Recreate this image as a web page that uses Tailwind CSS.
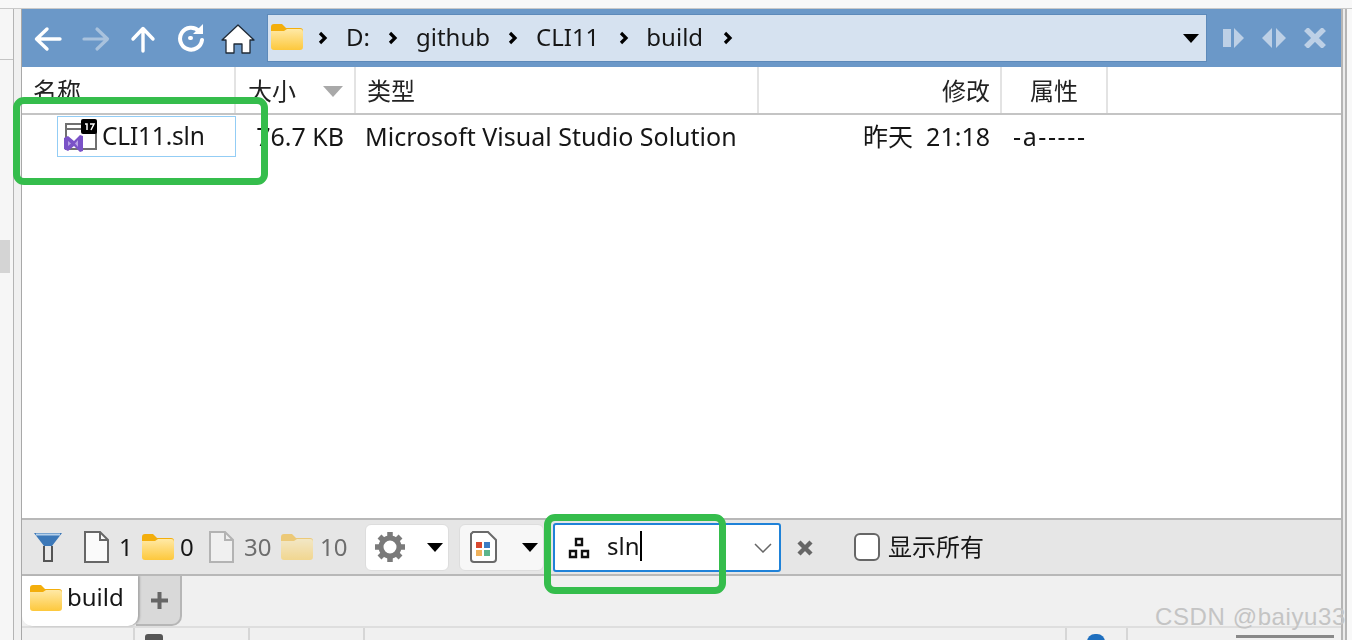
<!DOCTYPE html>
<html lang="zh">
<head>
    <meta charset="UTF-8">
    <title>build</title>
    <script src="https://cdn.jsdelivr.net/npm/@tailwindcss/browser@4"></script>
</head>
<body class="bg-[#f8f8f8] text-[#161616] font-['Noto_Sans','Noto_Sans_CJK_SC',sans-serif] overflow-hidden">

<!-- folder icon -->
<svg class="absolute w-0 h-0">
    <defs>
        <linearGradient id="fold" x1="0" y1="0" x2="0" y2="1">
            <stop offset="0" stop-color="#ffe9a6"/>
            <stop offset="1" stop-color="#fdc83c"/>
        </linearGradient>
        <symbol id="folder" viewBox="0 0 32 26">
            <path d="M0 3a3 3 0 0 1 3-3h8l4 4h14a3 3 0 0 1 3 3v4H0z" fill="#f3ae0c"/>
            <path d="M0 7h13l3-2h13a3 3 0 0 1 3 3v15a3 3 0 0 1-3 3H3a3 3 0 0 1-3-3z" fill="url(#fold)"/>
        </symbol>
    </defs>
</svg>

<div class="relative w-[1352px] h-[640px] overflow-hidden">
    <div class="flex flex-col w-full h-full blur-[0.4px]">
        <div class="h-[9px] shrink-0 bg-[#f8f8f8] border-b border-[#c9c9c9]"></div>

        <div class="flex flex-1 min-h-0">
            <!-- left rail -->
            <div class="w-[14px] shrink-0 bg-[#f6f6f6] border-r border-[#b4b4b4] pt-[50px]">
                <div class="h-[1px] bg-[#c4c4c4] mb-[180px]"></div>
                <div class="w-[10px] h-[33px] bg-[#d4d4d4]"></div>
            </div>
            <div class="w-[8px] shrink-0 bg-[#f0f0f0] border-r border-[#a8a8a8]"></div>

            <!-- main pane -->
            <div class="w-[1319px] shrink-0 flex flex-col min-h-0">
                <!-- nav bar -->
                <div class="h-[58px] shrink-0 bg-[#6b98c8] flex items-center pl-[11px] pr-[12px]">
                    <svg width="30" height="28" viewBox="0 0 30 28" fill="none" stroke="#fff" stroke-width="3.4" stroke-linecap="round" stroke-linejoin="round" class="shrink-0 mt-[1px]"><path d="M27 14H4M14 4 3.5 14 14 24"/></svg>
                    <svg width="30" height="28" viewBox="0 0 30 28" fill="none" stroke="#a9c2dd" stroke-width="3.2" stroke-linecap="round" stroke-linejoin="round" class="shrink-0 ml-[18px] mt-[1px]"><path d="M3 14h23M16 4l10.500 10L16 24"/></svg>
                    <svg width="28" height="28" viewBox="0 0 28 28" fill="none" stroke="#fff" stroke-width="3.4" stroke-linecap="round" stroke-linejoin="round" class="shrink-0 ml-[18px] mt-[1px]"><path d="M14 26V4M4 14 14 3.500 24 14"/></svg>
                    <svg width="30" height="30" viewBox="0 0 30 30" fill="none" stroke="#fff" stroke-width="4" stroke-linecap="round" class="shrink-0 ml-[19px] -mt-[1px]"><path d="M23 8a11 11 0 1 0 3 9"/><path d="M15 15h-1" stroke-width="4"/><path d="M17 11h10V1z" fill="#fff" stroke="none"/></svg>
                    <svg width="36" height="32" viewBox="0 0 36 32" fill="#fff" stroke="#1f2a36" stroke-width="1.300" stroke-linejoin="round" class="shrink-0 ml-[14px] mt-[1px]"><path d="M18 2 34 17h-4v13h-8v-9h-8v9H6V17H2z"/></svg>

                    <!-- address -->
                    <div class="ml-[11px] w-[940px] h-[48px] bg-[#d6e2f0] border border-[#5d8aba] flex items-center pl-[3px] pr-[7px] text-[24px] leading-none">
                        <svg width="32" height="26" class="shrink-0 -mt-[2px]"><use href="#folder"/></svg>
                        <svg width="11" height="14" viewBox="0 0 11 14" fill="none" stroke="#000" stroke-width="3.200" class="shrink-0 ml-[15px]"><path d="m2 2 5 5-5 5"/></svg>
                        <span class="ml-[17px] -mt-[2px]">D:</span>
                        <svg width="11" height="14" viewBox="0 0 11 14" fill="none" stroke="#000" stroke-width="3.200" class="shrink-0 ml-[18px]"><path d="m2 2 5 5-5 5"/></svg>
                        <span class="ml-[17px] -mt-[2px]">github</span>
                        <svg width="11" height="14" viewBox="0 0 11 14" fill="none" stroke="#000" stroke-width="3.200" class="shrink-0 ml-[18px]"><path d="m2 2 5 5-5 5"/></svg>
                        <span class="ml-[17px] -mt-[2px]">CLI11</span>
                        <svg width="11" height="14" viewBox="0 0 11 14" fill="none" stroke="#000" stroke-width="3.200" class="shrink-0 ml-[20px]"><path d="m2 2 5 5-5 5"/></svg>
                        <span class="ml-[16px] -mt-[2px]">build</span>
                        <svg width="11" height="14" viewBox="0 0 11 14" fill="none" stroke="#000" stroke-width="3.200" class="shrink-0 ml-[20px]"><path d="m2 2 5 5-5 5"/></svg>
                        <svg width="16" height="9" viewBox="0 0 16 9" class="shrink-0 ml-auto"><path d="M0 0h16L8 9z" fill="#000"/></svg>
                    </div>

                    <svg width="22" height="20" viewBox="0 0 22 20" fill="#bdd0e6" class="shrink-0 ml-[16px]"><path d="M0 1h8v18H0zM11 0l10 10-10 10z"/></svg>
                    <svg width="24" height="20" viewBox="0 0 24 20" fill="#bdd0e6" class="shrink-0 ml-[17px]"><path d="M10 0v20L0 10zM14 0v20l10-10z"/></svg>
                    <svg width="24" height="20" viewBox="0 0 24 20" fill="none" stroke="#bdd0e6" stroke-width="5.500" class="shrink-0 ml-[17px]"><path d="m3 1 18 18M21 1 3 19"/></svg>
                </div>

                <!-- column headers -->
                <div class="h-[48px] shrink-0 bg-white border-b-2 border-[#c4c4c4] grid grid-cols-[214px_120px_403px_243px_106px_1fr] text-[24px] leading-none text-[#222]">
                    <div class="border-r-2 border-[#e3e3e3] pl-[11px] pt-[12px]">名称</div>
                    <div class="border-r-2 border-[#e3e3e3] pl-[12px] pt-[12px] flex">
                        <span>大小</span>
                        <svg width="20" height="11" viewBox="0 0 20 11" class="ml-[27px] mt-[7px]"><path d="M0 0h20L10 11z" fill="#a9a9a9"/></svg>
                    </div>
                    <div class="border-r-2 border-[#e3e3e3] pl-[11px] pt-[12px]">类型</div>
                    <div class="border-r-2 border-[#e3e3e3] pr-[10px] pt-[12px] text-right">修改</div>
                    <div class="border-r-2 border-[#e3e3e3] pt-[12px] text-center">属性</div>
                    <div></div>
                </div>

                <!-- file list -->
                <div class="flex-1 min-h-0 bg-white">
                    <div class="grid grid-cols-[214px_120px_403px_243px_106px_1fr] text-[25px] leading-none h-[41px] mt-[1px] items-center">
                        <div class="pl-[35px]">
                            <div class="w-[179px] h-[41px] border border-[#93cdf5] flex items-center pl-[6px]">
                                <svg width="33" height="33" viewBox="0 0 33 33" class="shrink-0 -mt-[2px]">
                                    <path d="M2 5h30v25H2z" fill="#fff" stroke="#707070" stroke-width="2"/>
                                    <path d="M2 10h18" stroke="#707070" stroke-width="2"/>
                                    <rect x="17" y="0" width="16" height="15" rx="2" fill="#000"/>
                                    <path d="M21 5h2v6M26 5h4l-3 6" fill="none" stroke="#fff" stroke-width="1.500"/>
                                    <path d="M0 19l4-2 6 5 6-6 3 1v15l-3 1-6-6-6 5-4-2z" fill="#7a52c7"/>
                                    <path d="M4 22v5l3-2.500zM14 21l-3 3.500 3 3.500z" fill="#b9a3e6"/>
                                </svg>
                                <span class="ml-[5px] text-[24.500px] tracking-[-0.2px]">CLI11.sln</span>
                            </div>
                        </div>
                        <div class="text-right pr-[12px]">76.7 KB</div>
                        <div class="pl-[9px] whitespace-nowrap">Microsoft Visual Studio Solution</div>
                        <div class="text-right pr-[12px] whitespace-pre">昨天  21:18</div>
                        <div class="pl-[11px] tracking-[1.6px]">-a-----</div>
                        <div></div>
                    </div>
                </div>

                <!-- filter toolbar -->
                <div class="h-[58px] shrink-0 bg-[#e6e6e6] border-t-2 border-b-2 border-[#b8b8b8] flex items-center text-[24px] leading-none">
                    <svg width="30" height="32" viewBox="0 0 30 32" class="shrink-0 ml-[11px]">
                        <path d="M1 2h28L19 15v15h-8V15z" fill="#3c78b8"/>
                        <path d="M12 15h6v14h-6z" fill="#e8e8e8"/>
                        <path d="M11 15v15h8V15" fill="none" stroke="#555" stroke-width="2"/>
                        <path d="M3 3.500h24" stroke="#b5d0ea" stroke-width="2"/>
                    </svg>
                    <svg width="25" height="32" viewBox="0 0 25 32" fill="#fafafa" stroke="#666" stroke-width="2" class="shrink-0 ml-[21px]"><path d="M1 1h15l8 8v22H1z"/><path d="M16 1v8h8" fill="none"/></svg>
                    <span class="ml-[10px] w-[12px]">1</span>
                    <svg width="32" height="26" class="shrink-0 ml-[11px]"><use href="#folder"/></svg>
                    <span class="ml-[6px] w-[15px]">0</span>
                    <svg width="25" height="32" viewBox="0 0 25 32" fill="#f0f0f0" stroke="#b3b3b3" stroke-width="2" class="shrink-0 ml-[14px]"><path d="M1 1h15l8 8v22H1z"/><path d="M16 1v8h8" fill="none"/></svg>
                    <span class="ml-[10px] w-[28px] text-[#6d6d6d]">30</span>
                    <svg width="32" height="26" class="shrink-0 ml-[9px] opacity-50"><use href="#folder"/></svg>
                    <span class="ml-[7px] w-[28px] text-[#6d6d6d]">10</span>

                    <div class="ml-[17px] w-[84px] h-[47px] bg-white rounded-[6px] border border-[#ddd] flex items-center pl-[7px] shrink-0">
                        <svg width="34" height="34" viewBox="0 0 34 34" class="shrink-0">
                            <path d="M17 2v6M17 26v6M2 17h6M26 17h6M6.500 6.500l4 4M23.500 23.500l4 4M27.500 6.500l-4 4M10.500 23.500l-4 4" stroke="#7a7a7a" stroke-width="5.500"/>
                            <circle cx="17" cy="17" r="9" fill="none" stroke="#7a7a7a" stroke-width="5"/>
                        </svg>
                        <svg width="16" height="9" viewBox="0 0 16 9" class="shrink-0 ml-[20px]"><path d="M0 0h16L8 9z" fill="#000"/></svg>
                    </div>
                    <div class="ml-[10px] w-[85px] h-[47px] bg-[#f7f7f7] rounded-[6px] border border-[#ddd] flex items-center pl-[10px] shrink-0">
                        <svg width="27" height="32" viewBox="0 0 27 32" class="shrink-0">
                            <path d="M3 1h15l8 8v19a3 3 0 0 1-3 3H4a3 3 0 0 1-3-3V3z" fill="#fff" stroke="#6a6a6a" stroke-width="2"/>
                            <path d="M6 11h6v6H6z" fill="#d8482f"/><path d="M14 11h6v6h-6z" fill="#3b7cc4"/>
                            <path d="M6 19h6v6H6z" fill="#efb15a"/><path d="M14 19h6v6h-6z" fill="#5bb58c"/>
                        </svg>
                        <svg width="16" height="9" viewBox="0 0 16 9" class="shrink-0 ml-[25px]"><path d="M0 0h16L8 9z" fill="#000"/></svg>
                    </div>

                    <!-- search combo -->
                    <div class="ml-[9px] w-[228px] h-[49px] bg-white rounded-[3px] border-2 border-[#1f82d8] flex items-center pl-[13px] shrink-0">
                        <svg width="22" height="22" viewBox="0 0 22 22" fill="none" stroke="#111" stroke-width="2.400" class="shrink-0 mt-[2px]">
                            <path d="M8 2h6v6H8zM2 14h6v6H2zM14 14h6v6h-6z"/>
                        </svg>
                        <span class="ml-[17px] -mt-[3px]">sln</span>
                        <span class="w-[2px] h-[30px] bg-black -mt-[2px]"></span>
                        <svg width="18" height="10" viewBox="0 0 18 10" fill="none" stroke="#666" stroke-width="1.500" class="shrink-0 ml-auto mr-[7px] mt-[2px]"><path d="m1 1 8 8 8-8"/></svg>
                    </div>
                    <svg width="16" height="16" viewBox="0 0 16 16" fill="none" stroke="#666" stroke-width="4.400" class="shrink-0 ml-[16px] mt-[1px]"><path d="m2 2 12 12M14 2 2 14"/></svg>
                    <span class="ml-[41px] w-[26px] h-[28px] rounded-[6px] border-2 border-[#666] bg-white shrink-0"></span>
                    <span class="ml-[8px] text-[24px] whitespace-nowrap">显示所有</span>
                </div>

                <!-- tabs -->
                <div class="h-[50px] shrink-0 bg-[#f0f0f0] flex">
                    <div class="w-[116px] bg-white rounded-br-[10px] rounded-bl-[10px] flex items-center pl-[8px] pb-[6px] text-[24px] leading-none z-10 shadow-[2px_0_2px_#aaa]">
                        <svg width="32" height="26" class="shrink-0"><use href="#folder"/></svg>
                        <span class="ml-[5px] -mt-[2px]">build</span>
                    </div>
                    <div class="w-[46px] bg-[#d9d9d9] rounded-br-[10px] border-r-2 border-b-2 border-[#b6b6b6] flex items-center justify-center -ml-[2px] pl-[2px]">
                        <svg width="17" height="17" viewBox="0 0 17 17" stroke="#666" stroke-width="4"><path d="M8.500 0v17M0 8.500h17"/></svg>
                    </div>
                </div>

                <!-- status bar -->
                <div class="h-[14px] shrink-0 bg-[#f0f0f0] border-t-2 border-[#dedede] flex">
                    <div class="w-[113px] border-r-2 border-[#d6d6d6]"></div>
                    <div class="w-[115px] border-r-2 border-[#d6d6d6] pl-[10px]"><div class="w-[18px] h-[8px] mt-[6px] bg-[#555] rounded-t-[3px]"></div></div>
                    <div class="w-[115px] border-r-2 border-[#d6d6d6]"></div>
                    <div class="w-[702px] border-r-2 border-[#d6d6d6]"></div>
                    <div class="w-[61px] border-r-2 border-[#d6d6d6] pl-[20px]"><div class="w-[18px] h-[8px] mt-[6px] bg-[#1e6fbf] rounded-t-full"></div></div>
                    <div class="pl-[108px]"><div class="w-[98px] h-[3px] mt-[7px] bg-[#888]"></div></div>
                </div>
            </div>

            <!-- right rail -->
            <div class="w-[6px] shrink-0 bg-[#ececec] border-l-2 border-r-2 border-[#b5b5b5]"></div>
            <div class="flex-1 bg-[#f8f8f8]"></div>
        </div>
    </div>

    <!-- highlight boxes drawn on top of the screenshot -->
    <div class="absolute left-[13px] top-[97px] w-[255px] h-[88px] border-[7px] border-[#35bd4c] rounded-[11px]"></div>
    <div class="absolute left-[544px] top-[514px] w-[182px] h-[80px] border-[7px] border-[#35bd4c] rounded-[11px]"></div>

    <!-- watermark -->
    <div class="absolute left-[1155px] top-[605px] text-[24px] leading-none whitespace-nowrap text-[#c4c4c4] tracking-[0.6px] font-['Liberation_Sans',sans-serif]">CSDN @baiyu33</div>
</div>
</body>
</html>
